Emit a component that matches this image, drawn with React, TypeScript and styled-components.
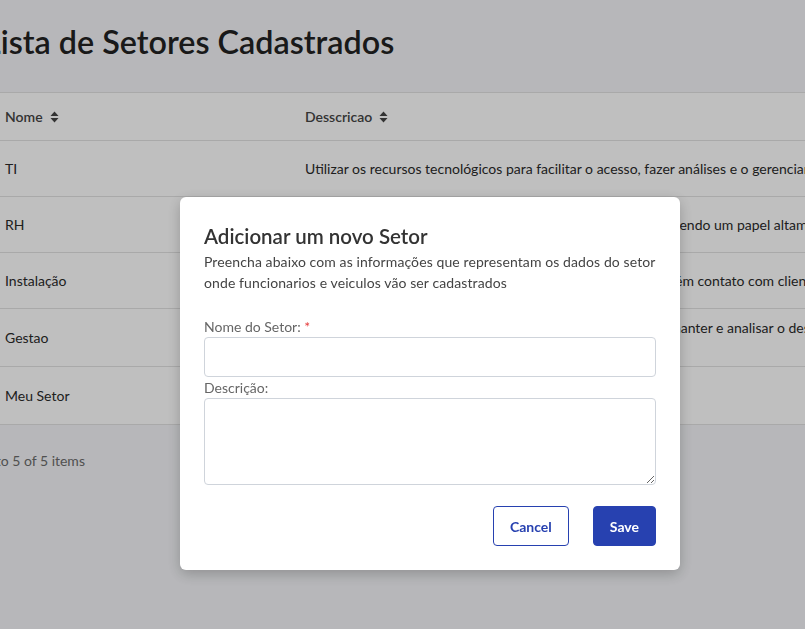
import React from "react";
import styled, { createGlobalStyle } from "styled-components";

const FONT = `Lato, "Noto Sans", "Liberation Sans", sans-serif`;

const Global = createGlobalStyle`
  html, body {
    margin: 0;
    padding: 0;
    overflow: hidden;
    background: #f4f5f8;
    font-family: ${FONT};
  }
  * { box-sizing: border-box; }
`;

const Page = styled.div`
  margin-left: -16px;
  width: 1400px;
  padding-top: 25px;
  color: #2a2a2a;
`;

const Title = styled.h1`
  margin: 0 0 33px;
  font-size: 32.3px;
  line-height: 34px;
  font-weight: 600;
  color: #222;
`;

const Table = styled.div`
  display: flex;
  flex-direction: column;
  background: #fff;
  border-top: 1px solid #e2e2e2;
`;

const Row = styled.div<{ $h: number }>`
  display: grid;
  grid-template-columns: 300px 1fr;
  align-items: center;
  height: ${(p) => p.$h}px;
  border-bottom: 1px solid #e2e2e2;
`;

const Cell = styled.div<{ $head?: boolean }>`
  padding: 0 21px;
  font-size: 14px;
  line-height: 21px;
  white-space: nowrap;
  font-weight: ${(p) => (p.$head ? 600 : 400)};
  color: ${(p) => (p.$head ? "#444" : "#2a2a2a")};
  display: flex;
  align-items: center;
  gap: 7px;
`;

const DescCell = styled(Cell)`
  display: block;
`;

const Footer = styled.div`
  padding-top: 25px;
  font-size: 14px;
  line-height: 21px;
  color: #6b6b6b;
`;

const Overlay = styled.div`
  position: fixed;
  inset: 0;
  background: rgba(0, 0, 0, 0.25);
  display: flex;
  align-items: flex-start;
  justify-content: flex-start;
  padding: 197px 0 0 180px;
`;

const Modal = styled.div`
  width: 500px;
  background: #fff;
  border-radius: 6px;
  box-shadow: 0 4px 14px rgba(0, 0, 0, 0.22);
  padding: 24px;
  display: flex;
  flex-direction: column;
  font-family: ${FONT};
`;

const ModalTitle = styled.h2`
  margin: 0;
  font-size: 20.5px;
  line-height: 30px;
  font-weight: 600;
  color: #333;
`;

const ModalText = styled.p`
  margin: 0 0 23px;
  font-size: 14px;
  line-height: 21px;
  letter-spacing: 0.1px;
  color: #444;
  white-space: nowrap;
`;

const Label = styled.label`
  display: block;
  font-size: 14px;
  line-height: 21px;
  color: #666;
`;

const Req = styled.span`
  color: #e53e3e;
`;

const Input = styled.input`
  display: block;
  width: 100%;
  height: 40px;
  border: 1px solid #cfd4db;
  border-radius: 4px;
  padding: 0 10px;
  font-family: ${FONT};
  font-size: 14px;
  outline: none;
`;

const TextArea = styled.textarea`
  display: block;
  width: 100%;
  height: 87px;
  border: 1px solid #cfd4db;
  border-radius: 4px;
  padding: 8px 10px;
  font-family: ${FONT};
  font-size: 14px;
  outline: none;
  resize: vertical;
`;

const Actions = styled.div`
  display: flex;
  justify-content: flex-end;
  gap: 24px;
  margin-top: 21px;
`;

const Button = styled.button<{ $primary?: boolean }>`
  height: 40px;
  padding: 0 16px;
  border-radius: 4px;
  border: 1px solid #2741b0;
  background: ${(p) => (p.$primary ? "#2741b0" : "#fff")};
  color: ${(p) => (p.$primary ? "#fff" : "#2741b0")};
  font-family: ${FONT};
  font-weight: 700;
  font-size: 14px;
  cursor: pointer;
`;

const SortIcon = () => (
  <svg width="9" height="12" viewBox="0 0 9 12" aria-hidden="true">
    <path d="M4.5 0.5 L8.5 5 H0.5 Z" fill="#444" />
    <path d="M4.5 11.5 L8.5 7 H0.5 Z" fill="#444" />
  </svg>
);

type Setor = { nome: string; desc: React.ReactNode; h: number };

const setores: Setor[] = [
  {
    nome: "TI",
    desc: "Utilizar os recursos tecnológicos para facilitar o acesso, fazer análises e o gerenciamento das informações da empresa",
    h: 56,
  },
  {
    nome: "RH",
    desc: "Responsável pela gestão de pessoas dentro da empresa exercendo um papel altamente estratégico",
    h: 56,
  },
  {
    nome: "Instalação",
    desc: "Realiza as instalações dos equipamentos nos veículos e mantém contato com clientes",
    h: 56,
  },
  {
    nome: "Gestao",
    desc: (
      <>
        Responsável por planejar, organizar e coordenar os setores, manter e analisar o desempenho
        <br />
        da empresa
      </>
    ),
    h: 58,
  },
  {
    nome: "Meu Setor",
    desc: (
      <>
        Descrição do meu setor
        <br />
        cadastrado
      </>
    ),
    h: 58,
  },
];

export default function App() {
  return (
    <>
      <Global />
      <Page>
        <Title>Lista de Setores Cadastrados</Title>
        <Table>
          <Row $h={48}>
            <Cell $head>
              Nome <SortIcon />
            </Cell>
            <Cell $head>
              Desscricao <SortIcon />
            </Cell>
          </Row>
          {setores.map((s) => (
            <Row key={s.nome} $h={s.h}>
              <Cell>{s.nome}</Cell>
              <DescCell>{s.desc}</DescCell>
            </Row>
          ))}
        </Table>
        <Footer>1 to 5 of 5 items</Footer>
      </Page>
      <Overlay>
        <Modal>
          <ModalTitle>Adicionar um novo Setor</ModalTitle>
          <ModalText>
            Preencha abaixo com as informações que representam os dados do setor
            <br />
            onde funcionarios e veiculos vão ser cadastrados
          </ModalText>
          <Label htmlFor="nome">
            Nome do Setor: <Req>*</Req>
          </Label>
          <Input id="nome" type="text" />
          <Label htmlFor="desc">Descrição:</Label>
          <TextArea id="desc" />
          <Actions>
            <Button type="button">Cancel</Button>
            <Button type="button" $primary>
              Save
            </Button>
          </Actions>
        </Modal>
      </Overlay>
    </>
  );
}
